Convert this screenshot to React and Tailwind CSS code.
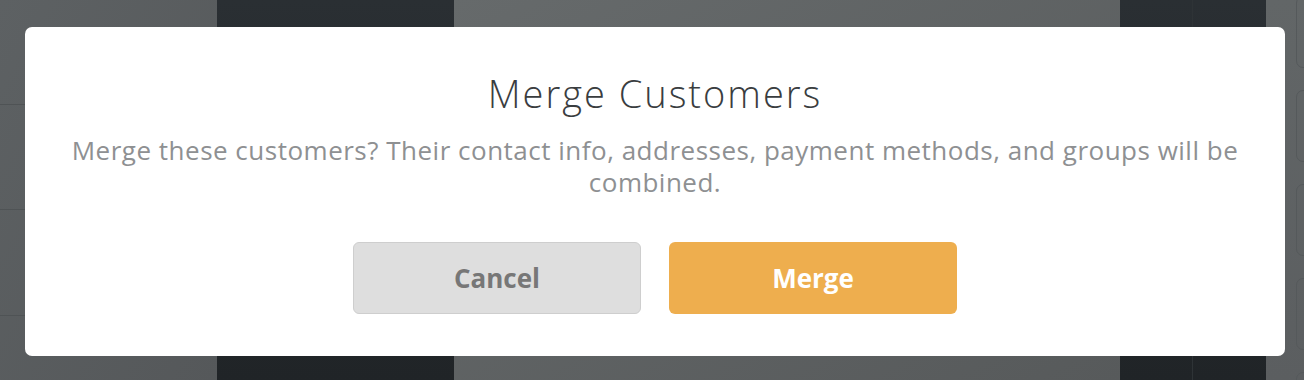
import React from 'react'

const RightCards = () => (
  <div className="flex flex-col gap-[22px] pl-[30px] -mt-[4px]">
    {[0, 1, 2, 3, 4].map(i => (
      <div key={i} className="h-[72px] w-[40px] rounded-[7px] border border-[#55595b]" />
    ))}
  </div>
)

const App = () => {
  return (
    <div className="relative w-[1304px] h-[380px] overflow-hidden font-['Open_Sans',sans-serif]">
      {/* dimmed page behind the dialog */}
      <div className="flex h-full">
        <div className="w-[217px] h-full bg-gradient-to-br from-[#5d6163] to-[#55585a] flex flex-col">
          <div className="h-[105px] border-b border-[#4f5355]" />
          <div className="h-[105px] border-b border-[#4f5355]" />
          <div className="h-[106px] border-b border-[#4f5355]" />
        </div>
        <div className="w-[237px] h-full bg-gradient-to-b from-[#2a2f33] to-[#202427]" />
        <div className="w-[666px] h-full bg-gradient-to-br from-[#666a6b] to-[#575a5b]" />
        <div className="w-[146px] h-full flex bg-gradient-to-b from-[#2a2f33] to-[#202427]">
          <div className="w-[73px] h-full border-r border-[#2e3336]" />
        </div>
        <div className="w-[38px] h-full bg-gradient-to-b from-[#626667] to-[#5b5e60] overflow-hidden">
          <RightCards />
        </div>
      </div>

      {/* dialog */}
      <div className="absolute left-[25px] top-[27px] w-[1260px] h-[329px] bg-white rounded-[7px] flex flex-col items-center pt-[44px]">
        <h2 className="text-[38px] leading-[44px] font-light text-[#3a3d3f] tracking-[2px]">Merge Customers</h2>
        <p className="mt-[19px] px-[30px] text-center text-[26px] leading-[32px] tracking-[0.5px] text-[#8e9092]">
          Merge these customers? Their contact info, addresses, payment methods, and groups will be combined.
        </p>
        <div className="mt-[44px] flex gap-[28px]">
          <button className="w-[288px] h-[72px] rounded-[6px] bg-[#dedede] border border-[#cecece] text-[26px] font-bold text-[#777777]">
            Cancel
          </button>
          <button className="w-[288px] h-[72px] rounded-[6px] bg-[#eeae4e] text-[26px] font-bold text-white">
            Merge
          </button>
        </div>
      </div>
    </div>
  )
}

export default App
